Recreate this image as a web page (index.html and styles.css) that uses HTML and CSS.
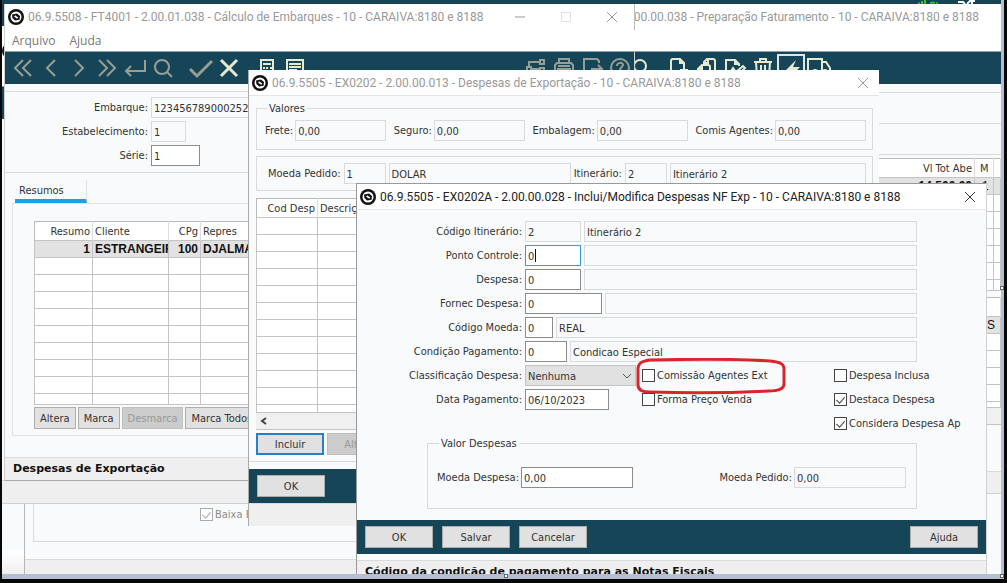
FILE: index.html
```
<!DOCTYPE html>
<html lang="pt-BR">
<head>
    <meta charset="UTF-8">
    <meta name="viewport" content="width=device-width, initial-scale=1.0">
    <title>Despesas de Exportação</title>
    <link rel="stylesheet" href="styles.css">
</head>
<body>
    <!-- shared icons -->
    <svg class="defs" width="0" height="0">
        <symbol id="logo" viewBox="0 0 16 16">
            <circle cx="8" cy="8" r="8" fill="#111"/>
            <circle cx="8" cy="8" r="5.500" fill="#fff"/>
            <path d="M4 5.400 9 4.600 12 7 11.600 10.800 7 11.400 4.400 9z" fill="#111"/>
            <path d="M6.600 7 9.800 9.200" stroke="#fff" stroke-width="1.600"/>
        </symbol>
        <symbol id="close" viewBox="0 0 12 12">
            <path d="M1 1 11 11M11 1 1 11"/>
        </symbol>
    </svg>

    <div class="screen">
        <div class="topbar">
            <svg width="60" height="4" viewBox="0 0 60 4">
                <path d="M1 3.500h2M5 1v3M8 0v4" stroke="#2fc52f" stroke-width="2"/>
                <path d="M14 4V2.500h3V4M20 2v2" stroke="#2fc52f" stroke-width="1.500" fill="none"/>
                <path d="M41 2h5l2 2M50 4l3-3h5M55 2v2" stroke="#fff" stroke-width="2" fill="none"/>
            </svg>
        </div>

        <!-- window with the stock check box -->
        <div class="window win-stock">
            <div class="stock-group">
                <label class="check disabled"><input type="checkbox" checked disabled>Baixa Estoque</label>
            </div>
            <div class="status"></div>
        </div>

        <!-- window showing only its left edge -->
        <div class="window win-edge">
            <div class="edge-title"><svg class="logo"><use href="#logo"/></svg></div>
            <div class="toolbar"></div>
            <div class="edge-body"></div>
            <div class="status"></div>
        </div>

        <!-- Preparação Faturamento -->
        <div class="window win-prep">
            <div class="title inactive">
                <span>2.00.00.038 - Preparação Faturamento - 10 - CARAIVA:8180 e 8188</span>
            </div>
            <div class="menu"></div>
            <div class="toolbar bright">
                <button type="button" aria-label="Pesquisar"><svg viewBox="0 0 24 24"><circle cx="11" cy="10" r="6"/><path d="M15.500 14.500 21 20"/></svg></button>
                <span class="sep"></span>
                <button type="button" aria-label="Incluir"><svg viewBox="0 0 24 24"><path d="M10 21H6a2 2 0 0 1-2-2V5a2 2 0 0 1 2-2h7l4 4v5M13 3v4h4M17 10v9M13 14h8"/></svg></button>
                <button type="button" aria-label="Copiar"><svg viewBox="0 0 24 24"><path d="M9 8V6l3-3h6a2 2 0 0 1 2 2v11h-5M9 7h4V3M3 13l4-4h6a2 2 0 0 1 2 2v10H3zM3 13h4V9"/></svg></button>
                <button type="button" aria-label="Modificar"><svg viewBox="0 0 24 24"><path d="M9 21H3V4h9l4 4v2M12 4v4h4M7 17l3-5 3 4 7-6 2 2-7 7"/></svg></button>
                <button type="button" aria-label="Eliminar"><svg viewBox="0 0 24 24"><path d="M3 6h18M9 6V3h6v3M5 6l1 15h12l1-15M10 9v9M14 9v9"/></svg></button>
                <button type="button" class="boxed" aria-label="Executar"><svg viewBox="0 0 24 24"><path class="solid" d="M17 4 7 14h6l-3 8 11-11h-7z"/></svg></button>
                <button type="button" aria-label="Transporte"><svg viewBox="0 0 24 24"><path d="M1 15V3h14v12M15 6h4l4 6v5h-3M1 15h4"/><circle cx="8" cy="16" r="2"/><circle cx="18" cy="16" r="2"/></svg></button>
            </div>
            <div class="prep-strip first"></div>
            <div class="prep-strip"></div>
            <div class="prep-strip"></div>
            <table class="grid prep-grid">
                <tr><th class="right">Vl Tot Abe</th><th class="narrow">M</th><th class="last"></th></tr>
                <tr class="selected"><td class="right">14.500,00</td><td>1</td><td></td></tr>
                <tr><td></td><td></td><td></td></tr>
                <tr><td></td><td></td><td></td></tr>
                <tr><td></td><td></td><td></td></tr>
                <tr><td></td><td></td><td></td></tr>
                <tr><td></td><td></td><td></td></tr>
                <tr class="cut"><td></td><td></td><td></td></tr>
            </table>
            <div class="prep-items">
                <table class="grid">
                    <tr><th></th></tr>
                    <tr class="selected"><td class="right plain">S</td></tr>
                    <tr><td></td></tr>
                    <tr><td></td></tr>
                    <tr><td></td></tr>
                    <tr><td></td></tr>
                    <tr class="cut"><td></td></tr>
                </table>
                <div class="scroll"></div>
            </div>
            <div class="prep-space"></div>
            <div class="status"></div>
        </div>

        <!-- Cálculo de Embarques -->
        <div class="window win-calc">
            <div class="title inactive">
                <svg class="logo"><use href="#logo"/></svg>
                <span>06.9.5508 - FT4001 - 2.00.01.038 - Cálculo de Embarques - 10 - CARAIVA:8180 e 8188</span>
                <div class="controls">
                    <button type="button" aria-label="Minimizar"><svg viewBox="0 0 12 12"><path d="M1 6h10"/></svg></button>
                    <button type="button" aria-label="Maximizar" class="faded"><svg viewBox="0 0 12 12"><path d="M1.500 1.500h9v9h-9z"/></svg></button>
                    <button type="button" aria-label="Fechar"><svg><use href="#close"/></svg></button>
                </div>
            </div>
            <div class="menu">
                <a href="#">Arquivo</a>
                <a href="#">Ajuda</a>
            </div>
            <div class="toolbar">
                <button type="button" aria-label="Primeiro"><svg viewBox="0 0 24 24"><path d="M12 4 4 12l8 8M20 4l-8 8 8 8"/></svg></button>
                <button type="button" aria-label="Anterior"><svg viewBox="0 0 24 24"><path d="M16 4 8 12l8 8"/></svg></button>
                <button type="button" aria-label="Próximo"><svg viewBox="0 0 24 24"><path d="M8 4l8 8-8 8"/></svg></button>
                <button type="button" aria-label="Último"><svg viewBox="0 0 24 24"><path d="M4 4l8 8-8 8M12 4l8 8-8 8"/></svg></button>
                <button type="button" aria-label="Vai para"><svg viewBox="0 0 24 24"><path d="M22 4v11H3M8 10l-5 5 5 5"/></svg></button>
                <button type="button" aria-label="Pesquisa"><svg viewBox="0 0 24 24"><circle cx="11" cy="11" r="7"/><path d="M16 16l5 5"/></svg></button>
                <span class="sep"></span>
                <button type="button" aria-label="Confirma"><svg viewBox="0 0 24 24"><path class="thick" d="M1 13l7 7L23 5"/></svg></button>
                <button type="button" class="on" aria-label="Cancela"><svg viewBox="0 0 24 24"><path class="thick" d="M4 4l16 16M20 4 4 20"/></svg></button>
                <span class="sep"></span>
                <button type="button" class="on" aria-label="Calcular"><svg viewBox="0 0 24 24"><path d="M6 4h12v18H6zM8 8h8M8 12h2M11 12h2M15 12h2M8 15h2M11 15h2M15 15h2"/></svg></button>
                <button type="button" class="on" aria-label="Relatório"><svg viewBox="0 0 24 24"><path d="M12 21H4V4h16v10M6 8h12M6 11h12M6 14h8"/><circle cx="18" cy="17" r="2"/></svg></button>
                <div class="tools-right">
                    <button type="button" aria-label="Consultas"><svg viewBox="0 0 24 24"><path d="M3 11h4v4H3zM16 4h4v4h-4zM16 12h4v4h-4zM7 13h9M5 11V6h11"/></svg></button>
                    <button type="button" aria-label="Relatórios"><svg viewBox="0 0 24 24"><path d="M7 7V3h10v4M5 18H3V9l2-2h14l2 2v9h-2M6 13h12v8H6zM6 10h12"/></svg></button>
                    <button type="button" aria-label="Sair"><svg viewBox="0 0 24 24"><path d="M19 7V5l-2-2H4v18h13l2-2M11 13h11M18 9l4 4-4 4"/></svg></button>
                    <button type="button" aria-label="Ajuda"><svg viewBox="0 0 24 24"><circle cx="12" cy="12" r="9"/><path d="M9 10c0-4 6-4 6-1 0 2-3 2-3 5M12 16v2"/></svg></button>
                </div>
            </div>
            <form class="calc-form">
                <label for="embarque">Embarque:</label>
                <input id="embarque" class="wide" value="123456789000252925" readonly>
                <label for="estab">Estabelecimento:</label>
                <input id="estab" class="small" value="1" readonly>
                <label for="serie">Série:</label>
                <input id="serie" value="1">
            </form>
            <div class="tabs"><span class="tab">Resumos</span></div>
            <div class="tab-panel">
                <table class="grid calc-grid">
                    <tr><th class="c1 right">Resumo</th><th class="c2">Cliente</th><th class="c3 right">CPg</th><th>Repres</th></tr>
                    <tr class="selected"><td class="right">1</td><td>ESTRANGEIR</td><td class="right">100</td><td>DJALMA</td></tr>
                    <tr><td></td><td></td><td></td><td></td></tr>
                    <tr><td></td><td></td><td></td><td></td></tr>
                    <tr><td></td><td></td><td></td><td></td></tr>
                    <tr><td></td><td></td><td></td><td></td></tr>
                    <tr><td></td><td></td><td></td><td></td></tr>
                    <tr><td></td><td></td><td></td><td></td></tr>
                    <tr><td></td><td></td><td></td><td></td></tr>
                    <tr><td></td><td></td><td></td><td></td></tr>
                    <tr class="cut"><td></td><td></td><td></td><td></td></tr>
                </table>
                <div class="calc-buttons">
                    <button type="button" class="btn">Altera</button>
                    <button type="button" class="btn">Marca</button>
                    <button type="button" class="btn" disabled>Desmarca</button>
                    <button type="button" class="btn">Marca Todos</button>
                </div>
            </div>
            <div class="status">Despesas de Exportação</div>
        </div>

        <!-- Despesas de Exportação -->
        <div class="window win-desp">
            <div class="title inactive">
                <svg class="logo"><use href="#logo"/></svg>
                <span>06.9.5505 - EX0202 - 2.00.00.013 - Despesas de Exportação - 10 - CARAIVA:8180 e 8188</span>
                <div class="controls">
                    <button type="button" aria-label="Fechar"><svg><use href="#close"/></svg></button>
                </div>
            </div>
            <div class="desp-body">
                <fieldset class="valores">
                    <legend>Valores</legend>
                    <div class="field"><label for="frete">Frete:</label><input id="frete" value="0,00" readonly></div>
                    <div class="field"><label for="seguro">Seguro:</label><input id="seguro" value="0,00" readonly></div>
                    <div class="field"><label for="embalagem">Embalagem:</label><input id="embalagem" value="0,00" readonly></div>
                    <div class="field"><label for="comis">Comis Agentes:</label><input id="comis" value="0,00" readonly></div>
                </fieldset>
                <div class="pedido">
                    <label for="moeda">Moeda Pedido:</label>
                    <input id="moeda" class="code" value="1" readonly>
                    <input class="name currency" aria-label="Nome da moeda" value="DOLAR" readonly>
                    <label for="itin">Itinerário:</label>
                    <input id="itin" class="code" value="2" readonly>
                    <input class="name" aria-label="Nome do itinerário" value="Itinerário 2" readonly>
                </div>
                <table class="grid desp-grid">
                    <tr><th class="c1 right">Cod Desp</th><th>Descrição</th></tr>
                    <tr><td></td><td></td></tr>
                    <tr><td></td><td></td></tr>
                    <tr><td></td><td></td></tr>
                    <tr><td></td><td></td></tr>
                    <tr><td></td><td></td></tr>
                    <tr><td></td><td></td></tr>
                    <tr><td></td><td></td></tr>
                    <tr><td></td><td></td></tr>
                    <tr><td></td><td></td></tr>
                    <tr><td></td><td></td></tr>
                    <tr><td></td><td></td></tr>
                    <tr class="cut"><td></td><td></td></tr>
                </table>
                <div class="scroll"><svg viewBox="0 0 8 8"><path d="M6 1 2 4l4 3"/></svg></div>
                <div class="desp-buttons">
                    <button type="button" class="btn focus">Incluir</button>
                    <button type="button" class="btn" disabled>Alterar</button>
                </div>
            </div>
            <div class="footer"><button type="button" class="btn">OK</button></div>
            <div class="status"></div>
        </div>

        <!-- Inclui/Modifica Despesas -->
        <div class="window win-edit">
            <div class="title">
                <svg class="logo"><use href="#logo"/></svg>
                <span>06.9.5505 - EX0202A - 2.00.00.028 - Inclui/Modifica Despesas NF Exp - 10 - CARAIVA:8180 e 8188</span>
                <div class="controls">
                    <button type="button" aria-label="Fechar"><svg><use href="#close"/></svg></button>
                </div>
            </div>
            <form class="edit-form">
                <div class="row">
                    <label for="cod-itin">Código Itinerário:</label>
                    <input id="cod-itin" class="w56" value="2" readonly>
                    <input class="desc" aria-label="Itinerário" value="Itinerário 2" readonly>
                </div>
                <div class="row">
                    <label for="ponto">Ponto Controle:</label>
                    <span class="caret-box"><input id="ponto" class="w56 focus" value="0"><i class="caret"></i></span>
                    <input class="desc" aria-label="Ponto" readonly>
                </div>
                <div class="row">
                    <label for="despesa">Despesa:</label>
                    <input id="despesa" class="w56" value="0">
                    <input class="desc" aria-label="Nome da despesa" readonly>
                </div>
                <div class="row">
                    <label for="fornec">Fornec Despesa:</label>
                    <input id="fornec" class="w77" value="0">
                    <input class="desc" aria-label="Fornecedor" readonly>
                </div>
                <div class="row">
                    <label for="cod-moeda">Código Moeda:</label>
                    <input id="cod-moeda" class="w28" value="0">
                    <input class="desc" aria-label="Moeda" value="REAL" readonly>
                </div>
                <div class="row">
                    <label for="cond">Condição Pagamento:</label>
                    <input id="cond" class="w42" value="0">
                    <input class="desc" aria-label="Condição" value="Condicao Especial" readonly>
                </div>
                <div class="options">
                    <label for="classif">Classificação Despesa:</label>
                    <span class="select-box">
                        <select id="classif"><option>Nenhuma</option></select>
                        <svg viewBox="0 0 10 6"><path d="M1 1l4 4 4-4"/></svg>
                    </span>
                    <label class="check marked"><input type="checkbox">Comissão Agentes Ext
                        <svg class="mark" viewBox="0 0 150 37"><path d="M14 2C60 1 105 1 134 3c12 1 14 4 14 8v15c0 5-5 7-16 7-40 2-84 2-118 1C5 34 2 31 2 27V11c0-6 4-8 12-9z"/></svg>
                    </label>
                    <label class="check"><input type="checkbox">Despesa Inclusa</label>

                    <label for="data">Data Pagamento:</label>
                    <input id="data" class="date" value="06/10/2023">
                    <label class="check"><input type="checkbox">Forma Preço Venda</label>
                    <label class="check"><input type="checkbox" checked>Destaca Despesa</label>

                    <label class="check last"><input type="checkbox" checked>Considera Despesa Ap</label>
                </div>
                <fieldset class="valor-desp">
                    <legend>Valor Despesas</legend>
                    <div class="field"><label for="m-desp">Moeda Despesa:</label><input id="m-desp" value="0,00"></div>
                    <div class="field"><label for="m-ped">Moeda Pedido:</label><input id="m-ped" value="0,00" readonly></div>
                </fieldset>
            </form>
            <div class="footer">
                <button type="button" class="btn">OK</button>
                <button type="button" class="btn">Salvar</button>
                <button type="button" class="btn">Cancelar</button>
                <button type="button" class="btn help">Ajuda</button>
            </div>
            <div class="status">Código da condição de pagamento para as Notas Fiscais</div>
        </div>
    </div>

    <i class="handle h-right"></i>
    <i class="handle h-bottom"></i>
    <i class="handle h-corner"></i>
</body>
</html>
```
FILE: styles.css
```
* {
    margin: 0;
    padding: 0;
    box-sizing: border-box;
}
html, body {
    height: 100%;
}
body {
    position: relative;
    display: flex;
    padding: 0 3px 4px 2px;
    background: #070707;
    font: 11px/13px "DejaVu Sans Condensed", "Liberation Sans", sans-serif;
    color: #333;
    overflow: hidden;
}
input, select, button {
    font: inherit;
    color: inherit;
}
a {
    color: inherit;
    text-decoration: none;
}
.defs {
    position: absolute;
}
.screen {
    position: relative;
    flex: 1;
    overflow: hidden;
    border-right: 3px solid #b3bfd1;
    border-bottom: 5px solid #b3bfd1;
    background: linear-gradient(#fff, #f0f0f2) left bottom / 22px 24px no-repeat #f8fafc;
}
.topbar {
    display: flex;
    justify-content: flex-end;
    height: 28px;
    padding-right: 24px;
    background: #174558;
}

/* windows */
.window {
    position: absolute;
    display: flex;
    flex-direction: column;
    background: #f8fafc;
}
.title {
    display: flex;
    align-items: center;
    gap: 4px;
    height: 26px;
    flex: none;
    padding-left: 3px;
    background: #fff;
    border-bottom: 1px solid #e4e6e8;
    font: 12px/16px Roboto, "Open Sans", sans-serif;
    color: #222;
    white-space: nowrap;
}
.title.inactive {
    color: #999;
}
.logo {
    width: 16px;
    height: 16px;
    flex: none;
}
.controls {
    display: flex;
    gap: 22px;
    margin-left: auto;
    padding-right: 4px;
}
.controls button {
    display: flex;
    align-items: center;
    justify-content: center;
    width: 24px;
    height: 24px;
    border: 0;
    background: none;
}
.controls svg {
    width: 12px;
    height: 12px;
    fill: none;
    stroke: #333;
}
.inactive .controls svg {
    stroke: #999;
}
.inactive .controls .faded svg {
    stroke: #e0e0e0;
}
.menu {
    display: flex;
    align-items: center;
    gap: 14px;
    height: 21px;
    padding-left: 7px;
    background: #fff;
    font: 12px/16px "Open Sans", sans-serif;
    color: #777;
}
.toolbar {
    display: flex;
    align-items: center;
    height: 33px;
    flex: none;
    padding-left: 4px;
    background: #174558;
    border-top: 1px solid #8fa0a8;
}
.toolbar button {
    display: flex;
    align-items: center;
    justify-content: center;
    width: 28px;
    height: 28px;
    border: 0;
    background: none;
}
.toolbar svg {
    width: 24px;
    height: 24px;
    fill: none;
    stroke: #989e94;
    stroke-width: 2;
}
.toolbar .on svg,
.toolbar.bright svg {
    stroke: #e6ead0;
}
.toolbar .thick {
    stroke-width: 3;
}
.toolbar .solid {
    fill: #e6ead0;
    stroke: none;
}
.toolbar .boxed {
    border: 2px solid #dfe4e6;
}
.sep {
    width: 10px;
}
.tools-right {
    display: flex;
    margin-left: auto;
}
.status {
    height: 23px;
    flex: none;
    padding: 4px 8px;
    background: #efefef;
    border-top: 1px solid #d8dadc;
    font: bold 11px/14px "DejaVu Sans", sans-serif;
    color: #111;
    white-space: nowrap;
    overflow: hidden;
}
.footer {
    display: flex;
    align-items: center;
    gap: 9px;
    height: 34px;
    padding: 0 8px;
    background: #174558;
}
.footer .help {
    margin-left: auto;
}

/* form controls */
label, legend {
    white-space: nowrap;
}
input, select {
    height: 21px;
    min-width: 0;
    padding: 1px 2px 0;
    background: #fff;
    border: 1px solid #8c8c8c;
    border-radius: 0;
    outline: 0;
}
input[readonly] {
    background: #f8fafc;
    border-color: #d8dadc;
}
input.focus {
    border-color: #3a96dd;
}
.btn {
    height: 22px;
    padding: 0 5px;
    background: #e1e1e1;
    border: 1px solid #adadad;
    text-align: center;
    white-space: nowrap;
}
.btn:disabled {
    background: #ccc;
    border-color: #bfbfbf;
    color: #999;
}
.btn.focus {
    border: 2px solid #2b7fc9;
}
.footer .btn,
.desp-buttons .btn {
    width: 68px;
}
fieldset, .pedido {
    border: 1px solid #d8dadc;
}
.field {
    display: flex;
    align-items: center;
    gap: 2px;
}
.check {
    display: flex;
    align-items: center;
    gap: 2px;
}
.check input {
    appearance: none;
    position: relative;
    width: 13px;
    height: 13px;
    flex: none;
    padding: 0;
    border: 1px solid #444;
}
.check input:checked::after {
    content: "";
    position: absolute;
    left: 3px;
    top: 1px;
    width: 4px;
    height: 7px;
    border: solid #444;
    border-width: 0 1px 1px 0;
    transform: rotate(42deg);
}
.check.disabled {
    color: #8c8c8c;
}
.check.disabled input,
.check.disabled input:checked::after {
    border-color: #aaa;
}

/* grids */
.grid {
    width: 100%;
    border-collapse: collapse;
    table-layout: fixed;
    background: #fff;
    border: 1px solid #b9b9b9;
}
.grid th {
    height: 19px;
    padding: 0 2px;
    border-right: 1px solid #ddd;
    font-weight: normal;
    text-align: left;
    white-space: nowrap;
    overflow: hidden;
}
.grid td {
    height: 17px;
    padding: 0 2px;
    border: 1px solid #c4c4c4;
    font: bold 12px/14px "Liberation Sans", sans-serif;
    color: #111;
    white-space: nowrap;
    overflow: hidden;
}
.grid .right {
    text-align: right;
}
.grid .selected td {
    background: #e2e2e2;
}
.grid .plain {
    font-weight: normal;
}
.grid .cut td {
    height: 11px;
}
.scroll {
    display: flex;
    align-items: center;
    height: 17px;
    padding-left: 4px;
    background: #f0f0f0;
    border-bottom: 1px solid #c4c4c4;
}
.scroll svg {
    width: 8px;
    height: 8px;
    fill: none;
    stroke: #444;
    stroke-width: 2;
}

/* window with the stock check box */
.win-stock {
    left: 22px;
    top: 100px;
    bottom: 0;
    width: 860px;
    border-left: 1px solid #b5b5b5;
}
.stock-group {
    display: flex;
    flex: 1;
    align-items: flex-end;
    margin: 20px 8px 17px;
    padding: 0 0 20px 166px;
    border: 1px solid #d8dadc;
}
.win-stock .status {
    height: 15px;
}

/* window behind at the left edge */
.win-edge {
    left: 0;
    top: 26px;
    bottom: 70px;
    width: 500px;
    border-bottom: 1px solid #d0d0d0;
}
.edge-title {
    height: 60px;
    padding-top: 17px;
    background: #fff;
}
.edge-body {
    flex: 1;
}

/* Preparação Faturamento */
.win-prep {
    left: 500px;
    right: 0;
    top: 4px;
}
.win-prep .title {
    justify-content: flex-end;
    padding-right: 22px;
    border: 0;
}
.win-prep .toolbar {
    padding-left: 125px;
}
.prep-strip {
    height: 31px;
    border-bottom: 1px solid #d8dadc;
}
.prep-strip.first {
    height: 9px;
}
.win-prep .prep-grid {
    margin-top: 3px;
}
.prep-grid .narrow {
    width: 19px;
    padding: 0 5px;
}
.prep-grid td:nth-child(2) {
    padding: 0 7px;
    font-weight: normal;
}
.prep-grid .last {
    width: 7px;
}
.prep-items {
    margin-top: 6px;
}
.prep-items .plain {
    padding-right: 5px;
}
.prep-items .cut td {
    height: 6px;
}
.prep-space {
    height: 46px;
}
.win-prep .status {
    border-bottom: 1px solid #d0d0d0;
}

/* Cálculo de Embarques */
.win-calc {
    left: 2px;
    top: 4px;
    width: 631px;
    border-bottom: 1px solid #aaa;
    border-left: 1px solid #d0d0d0;
}
.win-calc .title {
    border: 0;
    border-right: 1px solid #bbb;
}
.win-calc .controls {
    padding-right: 10px;
}
.win-calc .toolbar {
    border-right: 1px solid #ccc;
}
.calc-form {
    display: grid;
    grid-template-columns: 143px 1fr;
    gap: 3px;
    align-items: center;
    justify-items: start;
    margin-top: 7px;
    padding: 5px 0 6px;
    border-top: 1px solid #d8dadc;
    border-bottom: 1px solid #d8dadc;
}
.calc-form label {
    justify-self: end;
}
.calc-form input {
    width: 49px;
}
.calc-form .wide {
    width: 160px;
}
.calc-form .small {
    width: 35px;
}
.tabs {
    display: flex;
    margin-top: 7px;
    padding-left: 10px;
}
.tab {
    width: 72px;
    padding: 4px 4px 2px;
    border-bottom: 4px solid #1ba1e2;
    border-right: 1px solid #e0e0e0;
}
.tab-panel {
    margin: 0 8px 21px 7px;
    padding: 17px 21px 6px;
    border: 1px solid #dfe1e3;
}
.calc-grid .c1 {
    width: 58px;
}
.calc-grid .c2 {
    width: 76px;
}
.calc-grid .c3 {
    width: 32px;
}
.calc-buttons {
    display: flex;
    gap: 2px;
    margin-top: 2px;
}

/* Despesas de Exportação */
.win-desp {
    left: 246px;
    top: 70px;
    width: 631px;
    border-left: 1px solid #aaa;
}
.desp-body {
    margin-bottom: 7px;
    padding: 6px 6px 6px 7px;
    border-bottom: 1px solid #d8dadc;
}
.valores {
    display: flex;
    justify-content: space-between;
    padding: 5px 6px 8px 8px;
}
.valores input {
    width: 91px;
}
.valores legend {
    margin-left: 2px;
    padding: 0 2px;
}
.pedido {
    display: flex;
    align-items: center;
    gap: 3px;
    margin: 6px 0 7px;
    padding: 6px 6px 6px 11px;
}
.pedido .code {
    width: 42px;
}
.pedido .name {
    width: 196px;
    flex: 1 1 auto;
}
.pedido .currency {
    width: 182px;
}
.desp-grid .c1 {
    width: 61px;
}
.desp-grid .cut td {
    height: 8px;
}
.desp-buttons {
    display: flex;
    gap: 3px;
    margin-top: 3px;
}

/* Inclui/Modifica Despesas */
.win-edit {
    left: 354px;
    top: 183px;
    width: 631px;
    border: 1px solid #999;
    border-right-color: #d0d0d0;
}
.edit-form {
    display: flex;
    flex-direction: column;
    gap: 3px;
    padding: 11px 69px 11px 0;
}
.row {
    display: flex;
    align-items: center;
    gap: 3px;
}
.row > label {
    width: 165px;
    text-align: right;
}
.desc {
    flex: 1;
}
.w28 {
    width: 28px;
}
.w42 {
    width: 42px;
}
.w56 {
    width: 56px;
}
.w77 {
    width: 77px;
}
.caret-box {
    position: relative;
    display: flex;
}
.caret {
    position: absolute;
    left: 10px;
    top: 4px;
    width: 1px;
    height: 13px;
    background: #111;
}
.options {
    display: grid;
    grid-template-columns: 165px 111px 189px 1fr;
    grid-auto-rows: 21px;
    gap: 3px;
    align-items: center;
}
.options > label[for] {
    justify-self: end;
}
.options .check {
    position: relative;
    padding-left: 3px;
}
.options .last {
    grid-column: 4;
}
.date {
    width: 84px;
}
.select-box {
    position: relative;
    display: flex;
}
.select-box select {
    width: 100%;
    appearance: none;
    background: #e1e1e1;
    border-color: #c4c4c4;
}
.select-box svg {
    position: absolute;
    right: 4px;
    top: 8px;
    width: 10px;
    height: 6px;
    fill: none;
    stroke: #555;
}
/* red pen mark round the option */
.mark {
    position: absolute;
    left: -3px;
    top: -11px;
    width: 150px;
    height: 37px;
    fill: none;
    stroke: #d9252c;
    stroke-width: 3;
}
.valor-desp {
    display: flex;
    justify-content: space-between;
    margin-left: 70px;
    padding: 17px 10px 20px 9px;
}
.valor-desp legend {
    margin-left: 2px;
    padding: 0 2px;
}
.valor-desp input {
    width: 112px;
}
.win-edit .status {
    margin-top: 6px;
}

/* resize handles */
.handle {
    position: absolute;
    width: 4px;
    height: 4px;
    background: #fff;
    border: 1px solid #666;
}
.h-right {
    right: 3px;
    top: 49%;
}
.h-bottom {
    left: 50%;
    bottom: 5px;
}
.h-corner {
    right: 3px;
    bottom: 5px;
}
```
